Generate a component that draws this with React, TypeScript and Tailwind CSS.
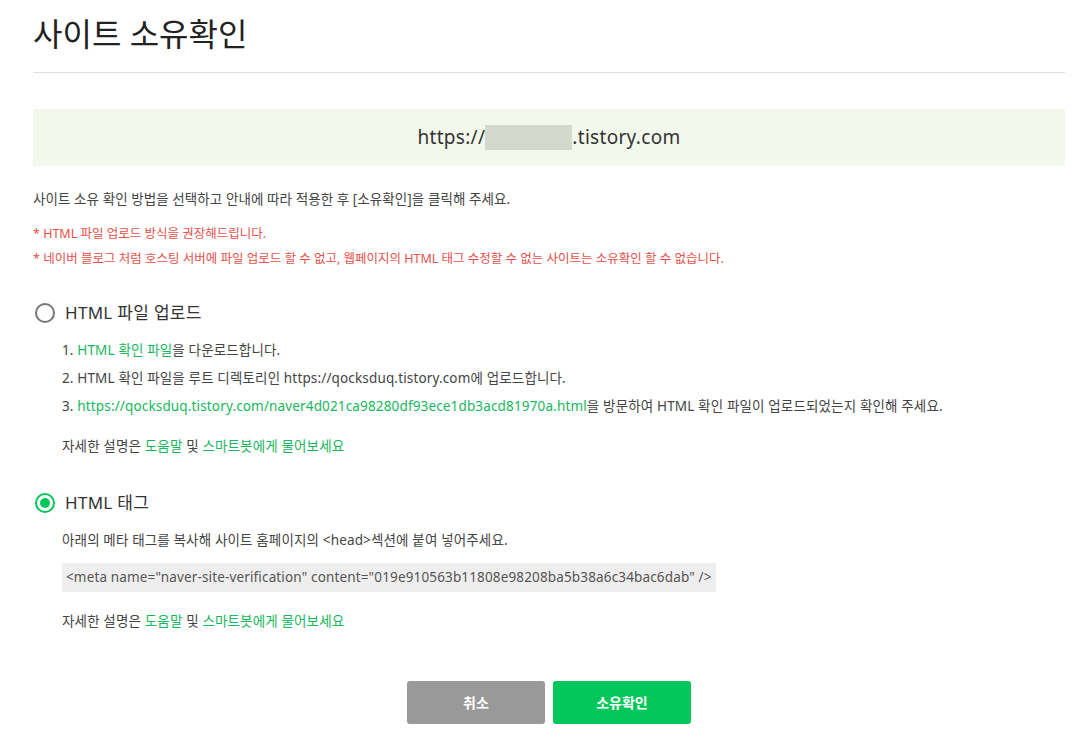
import React from "react";

const FONT = { fontFamily: '"Noto Sans", "Noto Sans CJK KR", sans-serif' };

function Radio({ checked }: { checked: boolean }) {
  return checked ? (
    <span className="flex h-5 w-5 shrink-0 items-center justify-center rounded-full border-2 border-[#03c75a]">
      <span className="h-2.5 w-2.5 rounded-full bg-[#03c75a]" />
    </span>
  ) : (
    <span className="h-5 w-5 shrink-0 rounded-full border-2 border-[#777]" />
  );
}

function HelpLine() {
  return (
    <p className="leading-[19px]">
      자세한 설명은 <span className="text-[#17b75e]">도움말</span> 및{" "}
      <span className="text-[#17b75e]">스마트봇에게 물어보세요</span>
    </p>
  );
}

export default function App() {
  return (
    <div className="min-h-screen w-full bg-white pl-[33px] pr-[18px] pt-[12px] text-[#333]" style={FONT}>
      <h1 className="pb-[16px] text-[32px] font-normal leading-[44px] text-[#222]">사이트 소유확인</h1>
      <div className="border-b border-[#dedede]" />

      <div className="mt-[36px] flex h-[57px] items-center justify-center bg-[#f3f8ec] text-[19px] tracking-[0.3px] text-[#333]">
        https://<span className="inline-block h-[25px] w-[87px] bg-[#d3dacd]" />.tistory.com
      </div>

      <div className="text-[13.5px] tracking-[0.15px] text-[#444]">
        <p className="mt-[24px] leading-[18px] tracking-[0.08px]">
          사이트 소유 확인 방법을 선택하고 안내에 따라 적용한 후 [소유확인]을 클릭해 주세요.
        </p>
        <p className="mt-[17px] text-[12.5px] leading-[17px] tracking-normal text-[#e5504a]">
          * HTML 파일 업로드 방식을 권장해드립니다.
        </p>
        <p className="mt-[8px] text-[12.5px] leading-[17px] tracking-normal text-[#e5504a]">
          * 네이버 블로그 처럼 호스팅 서버에 파일 업로드 할 수 없고, 웹페이지의 HTML 태그 수정할 수 없는 사이트는 소유확인 할 수 없습니다.
        </p>

        <div className="mt-[34px] flex h-[24px] items-center gap-[10px] pl-[2px]">
          <Radio checked={false} />
          <span className="text-[17px] tracking-[0.3px] text-[#333]">HTML 파일 업로드</span>
        </div>
        <div className="mt-[16px] flex flex-col gap-[9px] pl-[29px]">
          <p className="leading-[19px]">
            1. <span className="text-[#17b75e]">HTML 확인 파일</span>을 다운로드합니다.
          </p>
          <p className="leading-[19px]">2. HTML 확인 파일을 루트 디렉토리인 https://qocksduq.tistory.com에 업로드합니다.</p>
          <p className="leading-[19px]">
            3. <span className="text-[#17b75e]">https://qocksduq.tistory.com/naver4d021ca98280df93ece1db3acd81970a.html</span>을
            방문하여 HTML 확인 파일이 업로드되었는지 확인해 주세요.
          </p>
          <div className="mt-[12px]">
            <HelpLine />
          </div>
        </div>

        <div className="mt-[35px] flex h-[24px] items-center gap-[10px] pl-[2px]">
          <Radio checked />
          <span className="text-[17px] tracking-[0.3px] text-[#333]">HTML 태그</span>
        </div>
        <div className="mt-[16px] pl-[29px]">
          <p className="leading-[19px]">아래의 메타 태그를 복사해 사이트 홈페이지의 &lt;head&gt;섹션에 붙여 넣어주세요.</p>
          <div className="mt-[13px] inline-flex h-[29px] items-center bg-[#eeeeee] px-[4px] text-[#555]">
            &lt;meta name="naver-site-verification" content="019e910563b11808e98208ba5b38a6c34bac6dab" /&gt;
          </div>
          <div className="mt-[20px]">
            <HelpLine />
          </div>
        </div>
      </div>

      <div className="mt-[50px] flex justify-center gap-[8px]">
        <button className="h-[43px] w-[138px] rounded-[3px] bg-[#999999] text-[14px] font-bold text-white">취소</button>
        <button className="h-[43px] w-[138px] rounded-[3px] bg-[#03c75a] text-[14px] font-bold text-white">소유확인</button>
      </div>
    </div>
  );
}
